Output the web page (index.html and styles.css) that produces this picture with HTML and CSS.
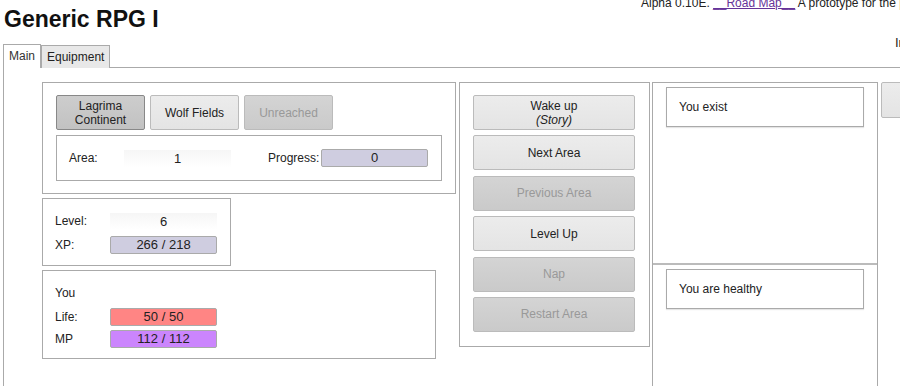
FILE: index.html
```html
<!DOCTYPE html>
<html lang="en">
<head>
    <meta charset="UTF-8">
    <title>Generic RPG I</title>
    <link rel="stylesheet" href="styles.css">
</head>
<body>

    <div class="header">
        <h1>Generic RPG I</h1>
        <div class="info">Alpha 0.10E. <a href="#">__Road Map__</a> A prototype for the project</div>
    </div>
    <div class="sub-info">Info</div>

    <!-- Tabs -->
    <div class="tabs">
        <div class="tab active">Main</div>
        <div class="tab">Equipment</div>
        <div class="tab-line"></div>
    </div>

    <div class="panel">
        <div class="column left-col">
            <div class="box area-box">
                <div class="btn-row">
                    <button class="btn selected">Lagrima<br>Continent</button>
                    <button class="btn">Wolf Fields</button>
                    <button class="btn disabled">Unreached</button>
                </div>
                <div class="inner-box">
                    <span class="label">Area:</span>
                    <span class="field">1</span>
                    <span class="label progress-label">Progress:</span>
                    <span class="bar progress">0</span>
                </div>
            </div>

            <div class="box level-box">
                <div class="stat-row">
                    <span class="label">Level:</span>
                    <span class="field">6</span>
                </div>
                <div class="stat-row">
                    <span class="label">XP:</span>
                    <span class="bar xp">266 / 218</span>
                </div>
            </div>

            <div class="box you-box">
                <div class="stat-title">You</div>
                <div class="stat-row">
                    <span class="label">Life:</span>
                    <span class="bar life">50 / 50</span>
                </div>
                <div class="stat-row">
                    <span class="label">MP</span>
                    <span class="bar mp">112 / 112</span>
                </div>
            </div>
        </div>

        <div class="box actions">
            <button class="btn wide">Wake up<br><i>(Story)</i></button>
            <button class="btn wide">Next Area</button>
            <button class="btn wide disabled">Previous Area</button>
            <button class="btn wide">Level Up</button>
            <button class="btn wide disabled">Nap</button>
            <button class="btn wide disabled">Restart Area</button>
        </div>

        <div class="log-col">
            <div class="log-section top">
                <div class="log-item">You exist</div>
            </div>
            <div class="log-section">
                <div class="log-item">You are healthy</div>
            </div>
        </div>

        <div class="far-right">
            <button class="btn stub"></button>
        </div>
    </div>

</body>
</html>
```

FILE: styles.css
```css
body {
    margin: 0;
    font-family: "Liberation Sans", Arial, sans-serif;
    font-size: 12px;
    color: #222;
    background-color: #fff;
    overflow: hidden;
}
.header {
    display: flex;
    height: 40px;
    white-space: nowrap;
    overflow: hidden;
}
h1 {
    margin: 6px 0 0 4px;
    font-size: 23px;
    font-weight: bold;
    color: #111;
    width: 637px;
    flex-shrink: 0;
}
.info {
    margin-top: -4px;
    font-size: 12px;
}
.info a {
    color: #663399;
}
.sub-info {
    height: 9px;
    padding-left: 895px;
    line-height: 14px;
    margin-top: -4px;
    font-size: 13px;
    white-space: nowrap;
}

/* Tabs */
.tabs {
    display: flex;
    align-items: flex-end;
    height: 23px;
    padding-left: 3px;
}
.tab {
    height: 22px;
    line-height: 22px;
    padding: 0 5px;
    border: 1px solid #aaa;
    border-bottom: none;
    background-color: #e8e8e8;
    color: #222;
}
.tab.active {
    background-color: #fff;
    height: 23px;
    color: #333;
}
.tab-line {
    flex: 1;
    border-bottom: 1px solid #aaa;
}

.panel {
    display: flex;
    align-items: flex-start;
    border-left: 1px solid #aaa;
    margin-left: 3px;
    padding: 14px 0 0 38px;
    height: 304px;
    overflow: hidden;
}
.panel > * {
    flex-shrink: 0;
}
.box {
    border: 1px solid #aaa;
    background-color: #fff;
}
.left-col {
    display: flex;
    flex-direction: column;
    gap: 4px;
    width: 414px;
}
.area-box {
    padding: 12px 13px 12px 13px;
}
.btn-row {
    display: flex;
    gap: 5px;
    margin-bottom: 5px;
}
button {
    font-family: "Liberation Sans", Arial, sans-serif;
}
.btn {
    width: 89px;
    height: 35px;
    padding: 0;
    font-size: 12px;
    line-height: 14px;
    color: #222;
    border: 1px solid #bbb;
    border-radius: 2px;
    background: linear-gradient(#ececec, #e4e4e4);
}
.btn.selected {
    background: linear-gradient(#cdcdcd, #c2c2c2);
    border-color: #888;
}
.btn.disabled {
    background: linear-gradient(#d4d4d4, #cacaca);
    color: #999;
    border-color: #bbb;
}
.inner-box {
    display: flex;
    align-items: center;
    border: 1px solid #aaa;
    height: 44px;
    padding-left: 12px;
}
.label {
    width: 55px;
}
.progress-label {
    width: 53px;
    margin-left: 37px;
}
.field {
    width: 107px;
    height: 17px;
    line-height: 17px;
    text-align: center;
    background: linear-gradient(#f6f6f6, #fff);
    font-size: 13px;
}
.bar {
    width: 105px;
    height: 16px;
    line-height: 16px;
    text-align: center;
    border: 1px solid #aaa;
    border-radius: 2px;
    font-size: 13px;
}
.progress, .xp {
    background-color: #cfcde0;
}
.life {
    background-color: #ff8584;
}
.mp {
    background-color: #cb85fd;
}
.level-box {
    width: 175px;
    height: 53px;
    padding: 13px 0 0 12px;
}
.stat-row {
    display: flex;
    align-items: center;
    height: 22px;
}
.level-box .stat-row:first-child {
    height: 18px;
    margin-bottom: 4px;
}
.you-box {
    width: 380px;
    height: 75px;
    padding: 12px 0 0 12px;
}
.stat-title {
    height: 23px;
    line-height: 20px;
}
.actions {
    display: flex;
    flex-direction: column;
    gap: 5.4px;
    width: 162px;
    margin-left: 3px;
    padding: 12px 14px 14px 13px;
}
.btn.wide {
    width: 162px;
    height: 35px;
}
.log-col {
    width: 224px;
    margin-left: 2px;
    border-left: 1px solid #aaa;
    border-right: 1px solid #aaa;
    border-top: 1px solid #aaa;
    height: 310px;
}
.log-section {
    height: 176px;
    padding: 4px 0 0 13px;
}
.log-section.top {
    height: 176px;
    border-bottom: 2px solid #bbb;
}
.log-item {
    width: 184px;
    height: 38px;
    border: 1px solid #aaa;
    padding-left: 12px;
    line-height: 38px;
    box-shadow: 0 1px 1px rgba(0, 0, 0, 0.1);
}
.far-right {
    margin-left: 3px;
    width: 19px;
    overflow: hidden;
}
.btn.stub {
    width: 40px;
    height: 36px;
}
```
